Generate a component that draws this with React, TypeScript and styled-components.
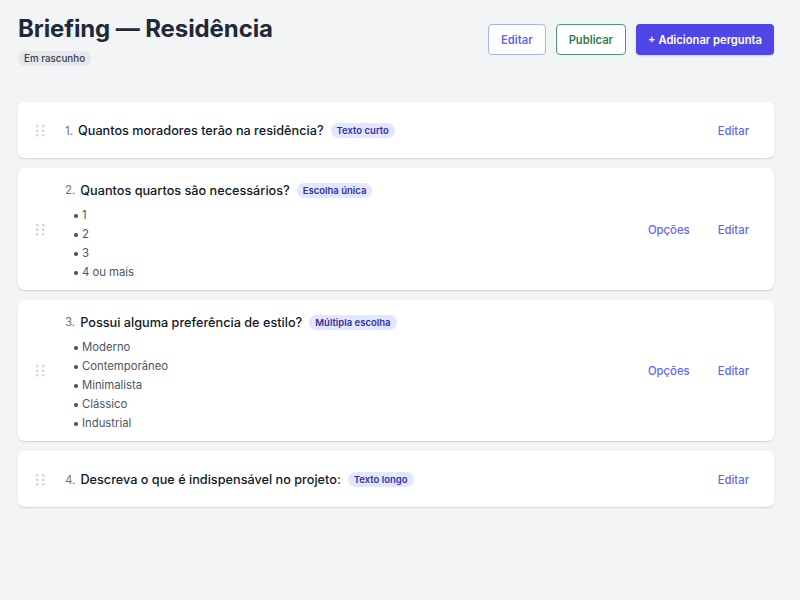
import { FC } from 'react'
import styled, { createGlobalStyle } from 'styled-components'

type Question = {
  id: number
  title: string
  kind: string
  options?: string[]
}

const questions: Question[] = [
  { id: 1, title: 'Quantos moradores terão na residência?', kind: 'Texto curto' },
  {
    id: 2,
    title: 'Quantos quartos são necessários?',
    kind: 'Escolha única',
    options: ['1', '2', '3', '4 ou mais'],
  },
  {
    id: 3,
    title: 'Possui alguma preferência de estilo?',
    kind: 'Múltipla escolha',
    options: ['Moderno', 'Contemporâneo', 'Minimalista', 'Clássico', 'Industrial'],
  },
  { id: 4, title: 'Descreva o que é indispensável no projeto:', kind: 'Texto longo' },
]

const GlobalStyle = createGlobalStyle`
  body {
    margin: 0;
    background: #f3f4f6;
    font-family: Inter, 'Noto Sans', sans-serif;
    color: #111827;
  }
`

const DragHandle: FC = () => (
  <Handle width="9" height="12" viewBox="0 0 9 12">
    {[0, 1, 2].map((row) =>
      [0, 1].map((col) => (
        <rect key={`${row}-${col}`} x={col * 6} y={row * 4.5} width="2.4" height="2.4" rx="0.6" fill="#d1d5db" />
      ))
    )}
  </Handle>
)

const App: FC = () => {
  return (
    <>
      <GlobalStyle />
      <Page>
        <Header>
          <TitleBlock>
            <Title>Briefing — Residência</Title>
            <StatusBadge>Em rascunho</StatusBadge>
          </TitleBlock>
          <Actions>
            <OutlineButton $tone="indigo">Editar</OutlineButton>
            <OutlineButton $tone="green">Publicar</OutlineButton>
            <PrimaryButton>+ Adicionar pergunta</PrimaryButton>
          </Actions>
        </Header>

        <List>
          {questions.map((q) => (
            <Card key={q.id}>
              <DragHandle />
              <Body>
                <QuestionRow>
                  <Number>{q.id}.</Number>
                  <QuestionText>{q.title}</QuestionText>
                  <KindBadge>{q.kind}</KindBadge>
                </QuestionRow>
                {q.options && (
                  <Options>
                    {q.options.map((o) => (
                      <li key={o}>{o}</li>
                    ))}
                  </Options>
                )}
              </Body>
              <CardActions>
                {q.options && <LinkButton>Opções</LinkButton>}
                <LinkButton>Editar</LinkButton>
              </CardActions>
            </Card>
          ))}
        </List>
      </Page>
    </>
  )
}

const Page = styled.div`
  padding: 14px 26px 18px 18px;
`

const Header = styled.header`
  display: flex;
  justify-content: space-between;
  align-items: flex-start;
  margin-bottom: 36px;
`

const TitleBlock = styled.div`
  display: flex;
  flex-direction: column;
  align-items: flex-start;
  gap: 7px;
`

const Title = styled.h1`
  margin: 0;
  font-size: 24px;
  font-weight: 700;
  line-height: 30px;
  color: #1f2937;
  letter-spacing: -0.1px;
`

const StatusBadge = styled.span`
  font-size: 9.8px;
  font-weight: 500;
  color: #374151;
  background: #e5e7eb;
  border-radius: 999px;
  padding: 2px 6px;
  line-height: 11px;
`

const Actions = styled.div`
  display: flex;
  gap: 10px;
  margin-top: 10px;
`

const OutlineButton = styled.button<{ $tone: 'indigo' | 'green' }>`
  height: 31px;
  padding: 0 12px;
  font-family: inherit;
  font-size: 11.2px;
  font-weight: 600;
  border-radius: 4px;
  background: #fff;
  cursor: pointer;
  color: ${(p) => (p.$tone === 'indigo' ? '#6366f1' : '#2f7d4f')};
  border: 1px solid ${(p) => (p.$tone === 'indigo' ? '#a5b4fc' : '#4f9a6c')};
`

const PrimaryButton = styled.button`
  height: 31px;
  padding: 0 12px;
  font-family: inherit;
  font-size: 11.2px;
  font-weight: 600;
  border-radius: 4px;
  border: none;
  color: #fff;
  background: #4f46e5;
  box-shadow: 0 1px 2px rgba(0, 0, 0, 0.12);
  cursor: pointer;
`

const List = styled.div`
  display: flex;
  flex-direction: column;
  gap: 10px;
`

const Card = styled.div`
  display: flex;
  align-items: center;
  background: #fff;
  border-radius: 6px;
  box-shadow: 0 1px 2px rgba(0, 0, 0, 0.1), 0 1px 1px rgba(0, 0, 0, 0.04);
  padding: 11px 25px 10px 18px;
  min-height: 35px;
`

const Handle = styled.svg`
  flex: none;
  margin-right: 20px;
`

const Body = styled.div`
  flex: 1;
  display: flex;
  flex-direction: column;
`

const QuestionRow = styled.div`
  display: flex;
  align-items: center;
  height: 22px;
`

const Number = styled.span`
  font-size: 11.5px;
  color: #6b7280;
  margin-right: 5px;
`

const QuestionText = styled.span`
  font-size: 12.7px;
  font-weight: 500;
  color: #111827;
`

const KindBadge = styled.span`
  margin-left: 7px;
  font-size: 9.5px;
  font-weight: 600;
  color: #3730a3;
  background: #e0e7ff;
  border-radius: 999px;
  padding: 2px 6px;
  line-height: 11px;
`

const Options = styled.ul`
  margin: 5px 0 -2px;
  padding-left: 17px;
  list-style: none;
  font-size: 11.3px;
  color: #4b5563;
  line-height: 19px;

  li {
    position: relative;
  }

  li::before {
    content: '';
    position: absolute;
    left: -8px;
    top: 8px;
    width: 3.5px;
    height: 3.5px;
    border-radius: 50%;
    background: #4b5563;
  }
`

const CardActions = styled.div`
  display: flex;
  gap: 28px;
`

const LinkButton = styled.button`
  padding: 0;
  border: none;
  background: none;
  font-family: inherit;
  font-size: 11.3px;
  font-weight: 500;
  color: #6366f1;
  cursor: pointer;
`

export default App
